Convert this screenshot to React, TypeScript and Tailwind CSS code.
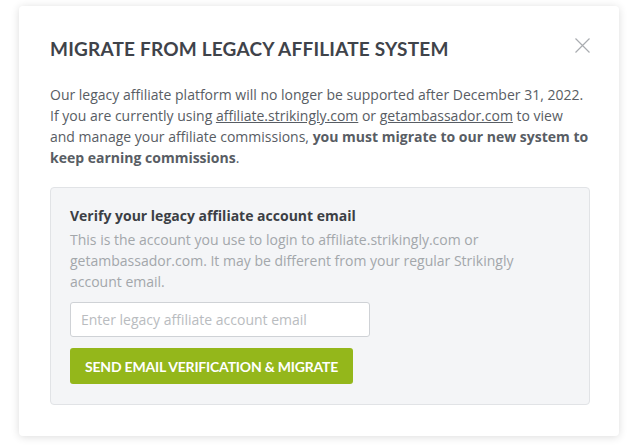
export default function App() {
    return (
        <div className="w-[642px] h-[448px] bg-white pt-[6px] pl-[19px] font-['Open_Sans',sans-serif]">
            <div className="relative w-[600px] h-[430px] bg-white rounded-[4px] shadow-[0_1px_8px_rgba(0,0,0,0.14)] px-[31px] pt-[31px]">
                {/* Close */}
                <button className="absolute right-[29px] top-[32px] w-[15px] h-[15px] text-[#a9acb0]">
                    <svg viewBox="0 0 15 15" width="15" height="15" fill="none" stroke="currentColor" strokeWidth="1.2">
                        <path d="M0.5 0.5 L14.5 14.5 M14.5 0.5 L0.5 14.5" />
                    </svg>
                </button>

                <h1 className="font-['Lato',sans-serif] font-bold text-[19px] leading-[24px] tracking-[0.2px] text-[#3f434a] uppercase">
                    Migrate from legacy affiliate system
                </h1>

                <p className="mt-[23px] text-[14px] leading-[21px] text-[#585d64] w-[539px]">
                    Our legacy affiliate platform will no longer be supported after December 31, 2022.
                    If you are currently using <a className="underline">affiliate.strikingly.com</a> or{" "}
                    <a className="underline">getambassador.com</a> to view and manage your affiliate
                    commissions, <strong className="font-bold">you must migrate to our new system to keep earning commissions</strong>.
                </p>

                <div className="mt-[19px] w-[540px] bg-[#f4f5f7] border border-[#e1e3e6] rounded-[4px] px-[19px] pt-[17px] pb-[20px]">
                    <div className="mb-[3px] text-[14px] leading-[21px] font-bold text-[#3c3f45]">
                        Verify your legacy affiliate account email
                    </div>
                    <p className="text-[14px] leading-[21px] text-[#a3a7ab] w-[470px]">
                        This is the account you use to login to affiliate.strikingly.com or getambassador.com.
                        It may be different from your regular Strikingly account email.
                    </p>
                    <input
                        type="text"
                        placeholder="Enter legacy affiliate account email"
                        className="mt-[10px] block w-[300px] h-[35px] bg-white border border-[#cfd2d6] rounded-[3px] px-[10px] text-[14px] text-[#555] placeholder:text-[#b9bcc0] outline-none"
                    />
                    <button className="mt-[11px] h-[36px] px-[15px] bg-[#94b71b] rounded-[3px] text-white font-['Lato',sans-serif] font-bold text-[14px] uppercase tracking-[-0.2px]">
                        Send email verification &amp; migrate
                    </button>
                </div>
            </div>
        </div>
    );
}
